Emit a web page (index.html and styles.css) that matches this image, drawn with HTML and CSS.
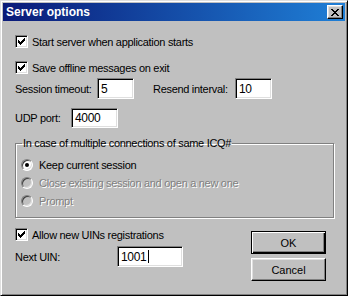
FILE: index.html
```html
<!DOCTYPE html>
<html lang="en">
<head>
    <meta charset="UTF-8">
    <title>Server options</title>
    <link rel="stylesheet" href="styles.css">
</head>
<body>

    <div class="window">
        <div class="titlebar">
            <span class="title">Server options</span>
            <span class="close">
                <svg width="8" height="7" viewBox="0 0 8 7">
                    <path d="M0 0h2v1H0zM6 0h2v1H6zM1 1h2v1H1zM5 1h2v1H5zM2 2h4v1H2zM3 3h2v1H3zM2 4h4v1H2zM1 5h2v1H1zM5 5h2v1H5zM0 6h2v1H0zM6 6h2v1H6z" fill="#000"/>
                </svg>
            </span>
        </div>

        <div class="content">
            <label class="check-row">
                <span class="checkbox checked"></span>
                Start server when application starts
            </label>
            <label class="check-row second">
                <span class="checkbox checked"></span>
                Save offline messages on exit
            </label>

            <div class="field-row timeouts">
                <span class="field-label">Session timeout:</span>
                <span class="textbox short">5</span>
                <span class="field-label resend">Resend interval:</span>
                <span class="textbox short">10</span>
            </div>

            <div class="field-row udp">
                <span class="field-label port">UDP port:</span>
                <span class="textbox port-box">4000</span>
            </div>

            <fieldset class="group">
                <legend>In case of multiple connections of same ICQ#</legend>
                <div class="radio-row">
                    <span class="radio selected"></span>
                    Keep current session
                </div>
                <div class="radio-row disabled">
                    <span class="radio"></span>
                    Close existing session and open a new one
                </div>
                <div class="radio-row disabled">
                    <span class="radio"></span>
                    Prompt
                </div>
            </fieldset>

            <div class="bottom">
                <div class="bottom-left">
                    <label class="check-row">
                        <span class="checkbox checked"></span>
                        Allow new UINs registrations
                    </label>
                    <div class="field-row uin">
                        <span class="field-label uin-label">Next UIN:</span>
                        <span class="textbox uin-box">1001<span class="caret"></span></span>
                    </div>
                </div>
                <div class="buttons">
                    <button class="btn default">OK</button>
                    <button class="btn">Cancel</button>
                </div>
            </div>
        </div>
    </div>

</body>
</html>
```

FILE: styles.css
```css
body {
    margin: 0;
    font-family: "Liberation Sans", Arial, sans-serif;
    font-size: 11px;
    letter-spacing: -0.3px;
    color: #000;
    background: #c0c0c0;
}

.window {
    width: 348px;
    height: 296px;
    box-sizing: border-box;
    background: #c0c0c0;
    border: 1px solid;
    border-color: #dfdfdf #000 #000 #dfdfdf;
    box-shadow: inset 1px 1px #fff, inset -1px -1px #808080;
    padding: 2px;
}

.titlebar {
    height: 18px;
    display: flex;
    align-items: center;
    justify-content: space-between;
    padding: 0 2px 0 3px;
    background: linear-gradient(to right, #0a1a78, #1f7fd6);
}

.title {
    color: #fff;
    font-weight: bold;
    font-size: 12px;
    letter-spacing: 0;
}

.close {
    width: 16px;
    height: 14px;
    box-sizing: border-box;
    display: flex;
    align-items: center;
    justify-content: center;
    background: #c0c0c0;
    border: 1px solid;
    border-color: #fff #000 #000 #fff;
    box-shadow: inset -1px -1px #808080, inset 1px 1px #dfdfdf;
}

.content {
    padding: 14px 0 0 12px;
}

.check-row {
    display: flex;
    align-items: center;
    height: 13px;
}

.check-row.second {
    margin-top: 13px;
}

.checkbox {
    width: 13px;
    height: 13px;
    box-sizing: border-box;
    margin-right: 4px;
    background: #fff;
    border: 1px solid;
    border-color: #808080 #fff #fff #808080;
    box-shadow: inset 1px 1px #000, inset -1px -1px #dfdfdf;
    flex: none;
}

.checkbox.checked {
    background: #fff url("data:image/svg+xml;utf8,<svg xmlns='http://www.w3.org/2000/svg' width='7' height='7'><path d='M0 2h1v3H0zM1 3h1v3H1zM2 4h1v3H2zM3 3h1v3H3zM4 2h1v3H4zM5 1h1v3H5zM6 0h1v3H6z' fill='black'/></svg>") no-repeat 2px 2px;
}

.field-row {
    display: flex;
    align-items: center;
}

.timeouts {
    margin-top: 4px;
}

.udp {
    margin-top: 9px;
}

.field-label {
    width: 82px;
    flex: none;
}

.field-label.resend {
    margin-left: 19px;
}

.field-label.port {
    width: 56px;
}

.textbox {
    height: 21px;
    box-sizing: border-box;
    display: flex;
    align-items: center;
    padding-left: 3px;
    background: #fff;
    border: 1px solid;
    border-color: #808080 #fff #fff #808080;
    box-shadow: inset 1px 1px #000, inset -1px -1px #dfdfdf;
    font-size: 12px;
}

.textbox.short {
    width: 37px;
}

.textbox.port-box {
    width: 47px;
    height: 20px;
}

.group {
    width: 319px;
    box-sizing: border-box;
    margin: 9px 0 0 0;
    padding: 10px 0 10px 5px;
    border: 1px solid #808080;
    box-shadow: inset 1px 1px #fff, 1px 1px #fff;
}

.group legend {
    padding: 0 1px;
    margin-left: 1px;
}

.radio-row {
    display: flex;
    align-items: center;
    height: 12px;
    margin-bottom: 6px;
}

.radio-row:last-child {
    margin-bottom: 0;
}

.radio {
    width: 12px;
    height: 12px;
    box-sizing: border-box;
    margin-right: 6px;
    border-radius: 50%;
    background: #fff;
    border: 1px solid;
    border-color: #808080 #fff #fff #808080;
    box-shadow: inset 1px 1px #404040, inset -1px -1px #dfdfdf;
    display: flex;
    align-items: center;
    justify-content: center;
    flex: none;
}

.radio.selected::after {
    content: "";
    width: 4px;
    height: 4px;
    border-radius: 50%;
    background: #000;
}

.radio-row.disabled {
    color: #808080;
    text-shadow: 1px 1px #fff;
}

.radio-row.disabled .radio {
    background: #c0c0c0;
}

.bottom {
    display: flex;
    justify-content: space-between;
    margin: 10px 19px 0 0;
}

.uin {
    margin-top: 5px;
}

.field-label.uin-label {
    width: 102px;
}

.textbox.uin-box {
    width: 66px;
}

.caret {
    width: 1px;
    height: 13px;
    margin-left: 1px;
    background: #000;
}

.buttons {
    display: flex;
    flex-direction: column;
    gap: 4px;
    margin-top: 3px;
}

.btn {
    width: 75px;
    height: 23px;
    box-sizing: border-box;
    padding: 0;
    font: inherit;
    font-size: 11px;
    letter-spacing: 0;
    color: #000;
    background: #c0c0c0;
    border: 1px solid;
    border-color: #fff #000 #000 #fff;
    box-shadow: inset -1px -1px #808080, inset 1px 1px #dfdfdf;
}

.btn.default {
    border: 1px solid #000;
    box-shadow: inset 1px 1px #fff, inset -1px -1px #000, inset -2px -2px #808080;
}
```
